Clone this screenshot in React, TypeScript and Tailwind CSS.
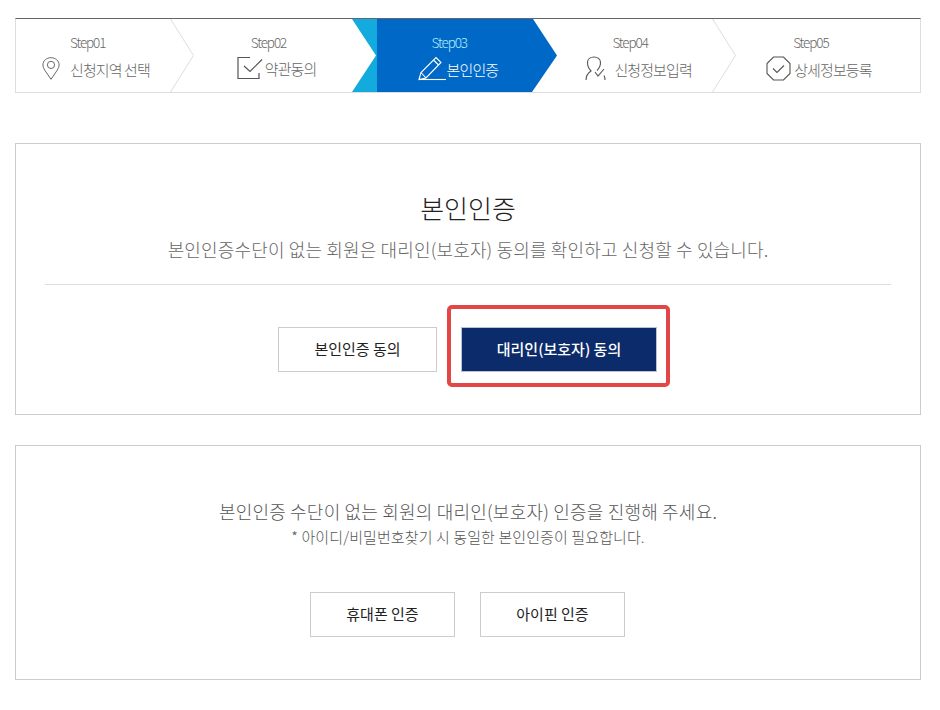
import React from 'react'

const PinIcon = () => (
  <svg width="18" height="25" viewBox="0 0 20 26" fill="none" stroke="#666" strokeWidth="1.1">
    <path d="M10 25 L3.5 15.5 C1.5 12.5 1 10.5 1 9 C1 4.5 5 1 10 1 C15 1 19 4.5 19 9 C19 10.5 18.5 12.5 16.5 15.5 Z" />
    <circle cx="10" cy="9" r="4" />
  </svg>
)

const CheckBoxIcon = () => (
  <svg width="26" height="24" viewBox="0 0 26 24" fill="none" stroke="#555" strokeWidth="1.2">
    <path d="M13 1.5 H1 V22.5 H22 V17" />
    <path d="M7 10 L13 15.5 L25 3.5" />
  </svg>
)

const PencilIcon = () => (
  <svg width="29" height="25" viewBox="0 0 29 25" fill="none" stroke="#fff" strokeWidth="1.1">
    <path d="M1 23.5 H28" />
    <path d="M1 23.5 L3 16.5 L18 1.5 L23 6.5 L8 22 Z" />
    <path d="M3 16.5 L8 22 M15.5 4 L20.5 9" />
  </svg>
)

const PersonIcon = () => (
  <svg width="21" height="25" viewBox="0 0 21 25" fill="none" stroke="#555" strokeWidth="1.1">
    <path d="M1 24 C1 19.5 3 17 6 15 C3.5 12.5 2.5 9.5 2.5 6.5 C2.5 3 5.5 1 9 1 C12.5 1 15.5 3 15.5 6.5 C15.5 9.5 14.5 12 12 14.5" />
    <path d="M10 16 L13 20 L19 13" />
    <path d="M20 24 C20 22.5 19.7 21 19 19.5" />
  </svg>
)

const OctagonCheckIcon = () => (
  <svg width="25" height="25" viewBox="0 0 25 25" fill="none" stroke="#555" strokeWidth="1.1">
    <path d="M7.5 1 H17.5 L24 7.5 V17.5 L17.5 24 H7.5 L1 17.5 V7.5 Z" />
    <path d="M7 12.5 L11 16.5 L18 9.5" />
  </svg>
)

const steps = [
  { label: 'Step01', title: '신청지역 선택', icon: <PinIcon />, row: 'pl-[26px] gap-[10px]', active: false },
  { label: 'Step02', title: '약관동의', icon: <CheckBoxIcon />, row: 'pl-[40px] gap-[2px]', active: false },
  { label: 'Step03', title: '본인인증', icon: <PencilIcon />, row: 'pl-[40px] gap-[0px]', active: true },
  { label: 'Step04', title: '신청정보입력', icon: <PersonIcon />, row: 'pl-[27px] gap-[8px]', active: false },
  { label: 'Step05', title: '상세정보등록', icon: <OctagonCheckIcon />, row: 'pl-[27px] gap-[3px]', active: false },
]

const Chevron = () => (
  <svg className="absolute right-[3px] top-0" width="24" height="73" viewBox="0 0 24 73" fill="none" stroke="#ddd">
    <path d="M0.5 0 L23.5 36.5 L0.5 73" />
  </svg>
)

const StepItem = ({ step, index }: { step: (typeof steps)[number]; index: number }) => {
  return (
    <li className="relative h-[73px] w-[181px]">
      {index === 0 && <Chevron />}
      {index === 3 && <Chevron />}
      {index === 1 && (
        <svg className="absolute right-[1px] top-0" width="25" height="73" viewBox="0 0 25 73" fill="#13aade">
          <path d="M0 0 H25 V73 H0 L24 36.5 Z" />
        </svg>
      )}
      {step.active && (
        <svg className="absolute -left-[1px] top-0" width="180" height="73" viewBox="0 0 180 73" fill="#0068c6">
          <path d="M0 0 H156 L180 36.5 L155 73 H0 Z" />
        </svg>
      )}
      <div className={`relative pl-[54px] pt-[14px] text-[13.5px] font-light leading-[18px] tracking-[-1.1px] ${step.active ? 'text-[#b5ecff]' : 'text-[#666]'}`}>
        {step.label}
      </div>
      <div className={`relative mt-[5px] flex items-center ${step.row}`}>
        {step.icon}
        <span className={`relative top-[1px] text-[15px] font-light leading-[24px] tracking-[-0.9px] ${step.active ? 'text-white' : 'text-[#666]'}`}>
          {step.title}
        </span>
      </div>
    </li>
  )
}

const OutlineButton = ({ label, width }: { label: string; width: string }) => (
  <button className={`h-[45px] ${width} border border-[#ccc] bg-white text-[15px] text-[#222]`}>{label}</button>
)

export default function App() {
  return (
    <div className="ml-[15px] w-[906px] bg-white pb-[30px] pt-[18px]">
      <div className="font-['Noto_Sans_CJK_KR','Noto_Sans',sans-serif]">
        <ul className="flex h-[75px] border border-t-[#666] border-x-[#ddd] border-b-[#ddd]">
          {steps.map((step, index) => (
            <StepItem key={step.label} step={step} index={index} />
          ))}
        </ul>

        <section className="mt-[50px] h-[272px] border border-[#ccc] px-[29px] pt-[45px]">
          <h2 className="text-center text-[26px] font-light leading-[38px] text-[#222]">본인인증</h2>
          <p className="mt-[9px] text-center text-[18px] font-light leading-[26px] tracking-[0.15px] text-[#666]">
            본인인증수단이 없는 회원은 대리인(보호자) 동의를 확인하고 신청할 수 있습니다.
          </p>
          <div className="mt-[22px] border-t border-[#ddd]" />
          <div className="mt-[42px] flex justify-center gap-[24px] pr-[1px]">
            <OutlineButton label="본인인증 동의" width="w-[159px]" />
            <div className="relative">
              <button className="h-[45px] w-[196px] border border-[#b8c2d4] bg-[#0b2b6b] text-[15px] font-medium text-white">
                대리인(보호자) 동의
              </button>
              <div className="absolute -bottom-[15px] -left-[14px] -right-[13px] -top-[22px] rounded-[5px] border-[4px] border-[#e24646]" />
            </div>
          </div>
        </section>

        <section className="mt-[30px] h-[235px] border border-[#ccc] pt-[51px]">
          <p className="text-center text-[18px] font-light leading-[28px] tracking-[0.2px] text-[#555]">
            본인인증 수단이 없는 회원의 대리인(보호자) 인증을 진행해 주세요.
          </p>
          <p className="mt-[1px] text-center text-[15px] font-light leading-[22px] tracking-[0.1px] text-[#555]">
            * 아이디/비밀번호찾기 시 동일한 본인인증이 필요합니다.
          </p>
          <div className="mt-[44px] flex justify-center gap-[25px] pr-[1px]">
            <OutlineButton label="휴대폰 인증" width="w-[145px]" />
            <OutlineButton label="아이핀 인증" width="w-[145px]" />
          </div>
        </section>
      </div>
    </div>
  )
}
